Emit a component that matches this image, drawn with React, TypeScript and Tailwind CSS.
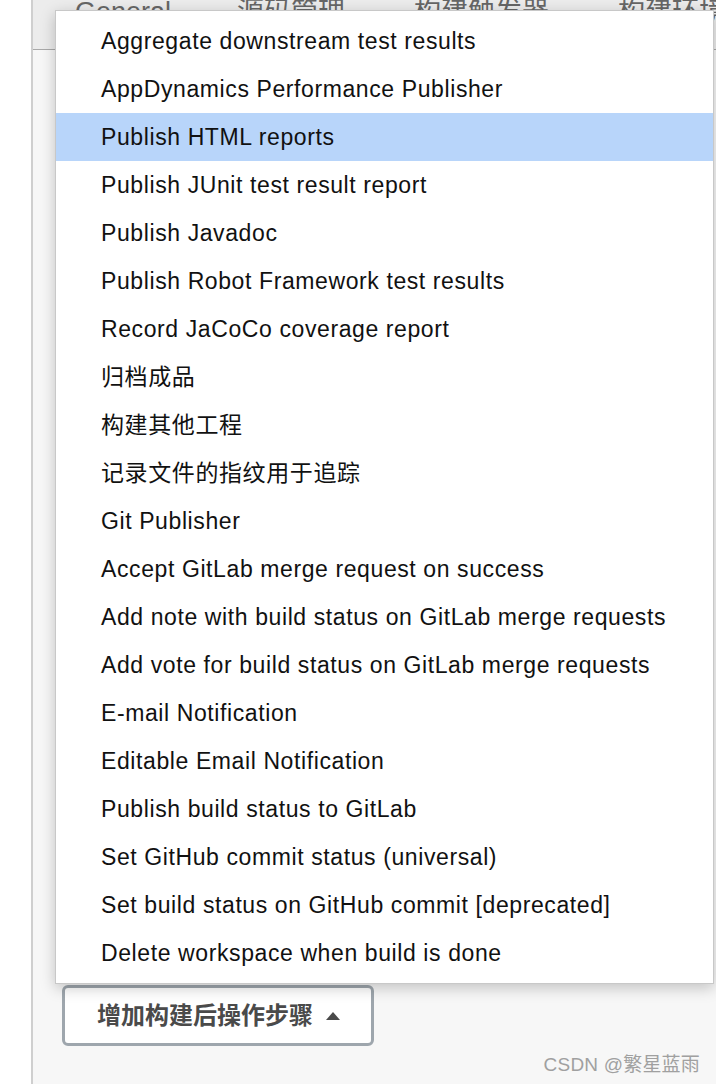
import React from "react";

const ITEMS: string[] = [
  "Aggregate downstream test results",
  "AppDynamics Performance Publisher",
  "Publish HTML reports",
  "Publish JUnit test result report",
  "Publish Javadoc",
  "Publish Robot Framework test results",
  "Record JaCoCo coverage report",
  "归档成品",
  "构建其他工程",
  "记录文件的指纹用于追踪",
  "Git Publisher",
  "Accept GitLab merge request on success",
  "Add note with build status on GitLab merge requests",
  "Add vote for build status on GitLab merge requests",
  "E-mail Notification",
  "Editable Email Notification",
  "Publish build status to GitLab",
  "Set GitHub commit status (universal)",
  "Set build status on GitHub commit [deprecated]",
  "Delete workspace when build is done",
];

const FONT = "font-['Liberation_Sans','Noto_Sans_CJK_SC',sans-serif]";

export default function App() {
  return (
    <div className={`w-[716px] h-[1084px] bg-white flex overflow-hidden ${FONT}`}>
      {/* left gutter */}
      <div className="w-[31px] shrink-0 bg-white" />

      {/* config panel */}
      <div className="relative flex-1 flex flex-col bg-[#f7f7f7] border-l-2 border-r-2 border-[#cfcfcf]">
        {/* tab bar, scrolled half out of view */}
        <div className="h-[50px] shrink-0 bg-[#ececec] border-b border-[#a9a9a9] overflow-hidden">
          <div className="flex whitespace-nowrap pl-[42px] -mt-[6px] text-[27px] leading-[36px] text-[#666]">
            <span className="w-[162px] shrink-0">General</span>
            <span className="w-[177px] shrink-0">源码管理</span>
            <span className="w-[204px] shrink-0">构建触发器</span>
            <span className="shrink-0">构建环境</span>
          </div>
        </div>

        {/* page body */}
        <div className="flex-1 pt-[935px] pl-[29px]">
          <button className="flex items-center gap-[12px] h-[61px] w-[312px] pl-[32px] bg-white border-[3px] border-[#9ea6ad] rounded-[6px] text-[#4a4a4a] text-[24px] font-semibold">
            <span>增加构建后操作步骤</span>
            <svg width="16" height="10" viewBox="0 0 16 10">
              <path d="M8 1 L15 9 L1 9 Z" fill="#4a4a4a" />
            </svg>
          </button>
        </div>

        {/* dropdown menu */}
        <ul className="absolute left-[22px] top-[10px] w-[659px] bg-white border border-[#c8c8c8] shadow-[0_4px_14px_rgba(0,0,0,0.22)] pt-[6px] pb-[6px]">
          {ITEMS.map((item) => (
            <li
              key={item}
              className={`h-[48px] flex items-center pl-[45px] text-[23px] tracking-[0.6px] text-[#111] ${
                item === "Publish HTML reports" ? "bg-[#b8d5fa]" : ""
              }`}
            >
              {item}
            </li>
          ))}
        </ul>

        {/* watermark */}
        <span className="absolute right-[26px] bottom-[5px] text-[19px] text-[#a0a0a0] tracking-[0.2px]">
          CSDN @繁星蓝雨
        </span>
      </div>
    </div>
  );
}
